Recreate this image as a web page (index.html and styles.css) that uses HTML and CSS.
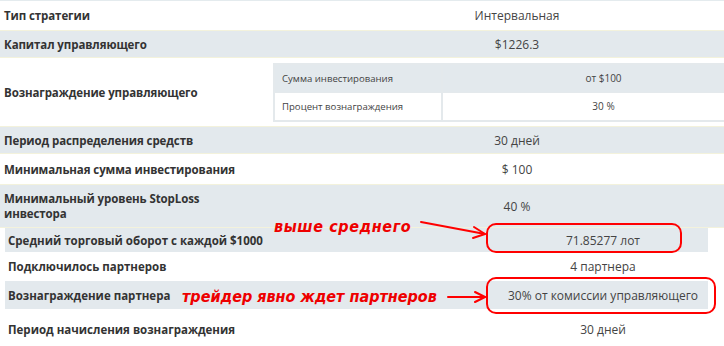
FILE: index.html
```html
<!DOCTYPE html>
<html lang="ru">
<head>
<meta charset="utf-8">
<link rel="stylesheet" href="styles.css">
</head>
<body>
<div class="page">
  <div class="tbl top">
    <div class="row r1"><div class="lbl">Тип стратегии</div><div class="val">Интервальная</div></div>
    <div class="row r2 blue"><div class="lbl">Капитал управляющего</div><div class="val">$1226.3</div></div>
    <div class="row r3"><div class="lbl">Вознаграждение управляющего</div>
      <div class="val nestwrap">
        <div class="nest">
          <div class="nrow blue"><div class="nlbl">Сумма инвестирования</div><div class="nval">от $100</div></div>
          <div class="nrow"><div class="nlbl">Процент вознаграждения</div><div class="nval">30 %</div></div>
        </div>
      </div>
    </div>
    <div class="row r4 blue"><div class="lbl">Период распределения средств</div><div class="val">30 дней</div></div>
    <div class="row r5"><div class="lbl">Минимальная сумма инвестирования</div><div class="val">$ 100</div></div>
    <div class="row r6 blue"><div class="lbl">Минимальный уровень StopLoss<br>инвестора</div><div class="val">40 %</div></div>
  </div>
  <div class="tbl bottom">
    <div class="row r7 blue"><div class="lbl">Средний торговый оборот с каждой $1000</div><div class="val">71.85277 лот</div></div>
    <div class="row r8"><div class="lbl">Подключилось партнеров</div><div class="val">4 партнера</div></div>
    <div class="row r9 blue"><div class="lbl">Вознаграждение партнера</div><div class="val">30% от комиссии управляющего</div></div>
    <div class="row r10"><div class="lbl">Период начисления вознаграждения</div><div class="val">30 дней</div></div>
  </div>

  <svg class="marks" width="724" height="346" viewBox="0 0 724 346">
    <g fill="none" stroke="#f00" stroke-width="2" stroke-linecap="round" stroke-linejoin="round">
      <rect x="487" y="224" width="194" height="28" rx="9"/>
      <rect x="487" y="278" width="228" height="35" rx="9"/>
      <path d="M421 222 L485 234"/>
      <path d="M474 227 L485 234 L473 238"/>
      <path d="M448 297 L485 297"/>
      <path d="M475 292 L485 297 L475 302"/>
    </g>
  </svg>
  <span class="note n1">выше среднего</span>
  <span class="note n2">трейдер явно ждет партнеров</span>
</div>
</body>
</html>
```

FILE: styles.css
```css
html, body {
  margin: 0;
  padding: 0;
  background: #fff;
}
.page {
  position: relative;
  width: 724px;
  height: 346px;
  overflow: hidden;
  font-family: "Open Sans", "Noto Sans", sans-serif;
  color: #444;
}
.tbl {
  display: flex;
  flex-direction: column;
}
.top {
  width: 766px;
  border-top: 1px solid #e4ebee;
}
.bottom {
  width: 703px;
  margin-left: 5px;
}
.row {
  display: grid;
  align-items: center;
  box-sizing: border-box;
}
.top .row { grid-template-columns: 268px 1fr; }
.bottom .row { grid-template-columns: 493px 1fr; }
.blue {
  background: #e3e9ed;
}
.top .row.blue {
  border-top: 1px solid #f3f2dc;
  border-bottom: 1px solid #f3f2dc;
}
.lbl {
  font-weight: 700;
  font-size: 11.5px;
  line-height: 15px;
  color: #333;
  padding-left: 4px;
  letter-spacing: -0.1px;
}
.bottom .lbl { padding-left: 3px; letter-spacing: 0; }
.val {
  text-align: center;
  font-size: 12px;
  line-height: 15px;
}
.r1 { height: 29px; }
.r2 { height: 28px; }
.r3 { height: 68px; }
.r4 { height: 28px; }
.r5 { height: 30px; }
.r6 { height: 44px; }
.r7 { height: 24px; }
.r8 { height: 29px; }
.r9 { height: 28px; }
.r10 { height: 40px; }
.nestwrap {
  padding-left: 5px;
  text-align: left;
}
.nest {
  border: 2px solid #e4e9ec;
  display: flex;
  flex-direction: column;
}
.nrow {
  display: grid;
  grid-template-columns: 168px 1fr;
  height: 27px;
  align-items: stretch;
}
.nrow + .nrow { border-top: 1px solid #e4e9ec; }
.nlbl, .nval {
  display: flex;
  align-items: center;
  font-size: 9.6px;
  color: #444;
}
.nval { font-size: 10px; }
.nlbl {
  padding-left: 7px;
  border-right: 2px solid #e4e9ec;
}
.nval { justify-content: center; }
.marks {
  position: absolute;
  left: 0;
  top: 0;
}
.note {
  position: absolute;
  color: #ee0000;
  font-family: "DejaVu Sans", sans-serif;
  font-stretch: condensed;
  font-weight: 700;
  font-style: italic;
  font-size: 16px;
  line-height: 18px;
  white-space: nowrap;
}
.n1 { left: 274px; top: 218px; letter-spacing: 0.6px; }
.n2 { left: 182px; top: 288px; letter-spacing: 0; }
```
